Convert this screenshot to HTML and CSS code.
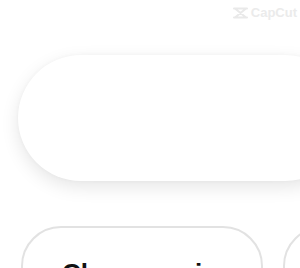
FILE: index.html
```html
<!DOCTYPE html>
<html>
<head>
<meta charset="utf-8">
<link rel="stylesheet" href="styles.css">
</head>
<body>
<div class="watermark">
  <svg class="wm-icon" width="15" height="12" viewBox="0 0 15 12">
    <path d="M1 1.5 H14 M1 10.5 H14 M2 1.5 L13 10.5 M13 1.5 L2 10.5" fill="none" stroke="#e9e9e9" stroke-width="2" stroke-linecap="round"/>
  </svg>
  <span class="wm-text">CapCut</span>
</div>
<div class="page">
  <div class="card"></div>
  <div class="pills">
    <div class="pill"><span class="pill-label">Change voice</span></div>
    <div class="pill"></div>
  </div>
</div>
</body>
</html>
```
FILE: styles.css
```css
html, body {
  margin: 0;
  padding: 0;
  background: #ffffff;
  overflow: hidden;
  width: 300px;
  height: 268px;
}
.watermark {
  position: absolute;
  top: 5px;
  right: 3px;
  display: flex;
  align-items: center;
  gap: 3px;
}
.wm-text {
  font-family: "Liberation Sans", Arial, sans-serif;
  font-weight: bold;
  font-size: 13px;
  color: #ebebeb;
}
.page {
  padding-top: 55px;
  padding-left: 18px;
}
.card {
  width: 330px;
  height: 126px;
  border-radius: 63px;
  background: #ffffff;
  box-shadow: 0 6px 18px rgba(0, 0, 0, 0.10), 0 0 4px rgba(0, 0, 0, 0.03);
}
.pills {
  display: flex;
  gap: 20px;
  margin-top: 45px;
  margin-left: 3px;
}
.pill {
  flex: none;
  width: 242px;
  height: 80px;
  border: 2px solid #e2e2e2;
  border-radius: 42px;
  box-sizing: border-box;
  padding: 30px 0 0 39px;
}
.pill-label {
  font-family: "Liberation Sans", Arial, sans-serif;
  font-weight: bold;
  font-size: 26px;
  color: #111111;
  white-space: nowrap;
}
```
